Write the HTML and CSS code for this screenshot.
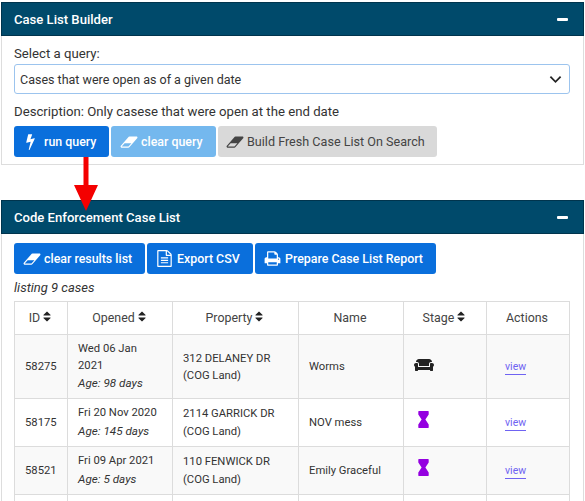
FILE: index.html
```html
<!DOCTYPE html>
<html lang="en">
<head>
  <meta charset="UTF-8">
  <meta name="viewport" content="width=device-width, initial-scale=1.0">
  <title>Code Enforcement Case List</title>
  <link rel="stylesheet" href="styles.css">
</head>
<body>
  <svg class="icon-defs" aria-hidden="true">
    <symbol id="i-bolt" viewBox="0 0 1792 1792"><path d="M1333 566q18 20 7 44l-540 1157q-13 25-42 25-4 0-14-2-17-5-25.5-19t-4.5-30l197-808-406 101q-4 1-12 1-18 0-31-11-18-15-13-39l201-825q4-14 16-23t28-9h328q19 0 32 12.5t13 29.5q0 8-5 18l-171 463 396-98q8-2 12-2 19 0 34 15z"/></symbol>
    <symbol id="i-eraser" viewBox="0 0 2048 1792"><path d="M960 1408l336-384h-768l-336 384h768zm1013-1077q15 34 9.5 71.5t-30.5 65.5l-896 1024q-38 44-96 44h-768q-38 0-69.5-20.5t-47.5-54.5q-15-34-9.5-71.5t30.5-65.5l896-1024q38-44 96-44h768q38 0 70 20.5t47 54.5z"/></symbol>
    <symbol id="i-file" viewBox="0 0 1792 1792"><path d="M1596 380q28 28 48 76t20 88v1152q0 40-28 68t-68 28h-1344q-40 0-68-28t-28-68v-1600q0-40 28-68t68-28h896q40 0 88 20t76 48zm-444-244v376h376q-10-29-22-41l-313-313q-12-12-41-22zm384 1528v-1024h-416q-40 0-68-28t-28-68v-416h-768v1536h1280zm-1024-864q0-14 9-23t23-9h704q14 0 23 9t9 23v64q0 14-9 23t-23 9h-704q-14 0-23-9t-9-23v-64zm736 224q14 0 23 9t9 23v64q0 14-9 23t-23 9h-704q-14 0-23-9t-9-23v-64q0-14 9-23t23-9h704zm0 256q14 0 23 9t9 23v64q0 14-9 23t-23 9h-704q-14 0-23-9t-9-23v-64q0-14 9-23t23-9h704z"/></symbol>
    <symbol id="i-print" viewBox="0 0 1792 1792"><path d="M448 1536h896v-256h-896v256zm0-640h896v-384h-160q-40 0-68-28t-28-68v-160h-640v640zm1152 64q0-26-19-45t-45-19-45 19-19 45 19 45 45 19 45-19 19-45zm128 0v416q0 13-9.500 22.500t-22.500 9.500h-224v160q0 40-28 68t-68 28h-960q-40 0-68-28t-28-68v-160h-224q-13 0-22.500-9.500t-9.500-22.500v-416q0-79 56.500-135.500t135.500-56.500h64v-544q0-40 28-68t68-28h672q40 0 88 20t76 48l152 152q28 28 48 76t20 88v256h64q79 0 135.500 56.500t56.500 135.500z"/></symbol>
    <symbol id="i-sort" viewBox="320 192 1152 1408"><path d="M1408 1088q0 26-19 45l-448 448q-19 19-45 19t-45-19l-448-448q-19-19-19-45t19-45 45-19h896q26 0 45 19t19 45zm0-384q0 26-19 45t-45 19h-896q-26 0-45-19t-19-45 19-45l448-448q19-19 45-19t45 19l448 448q19 19 19 45z"/></symbol>
    <symbol id="i-couch" viewBox="0 0 640 512"><path d="M160 224v64h320v-64c0-35.300 28.700-64 64-64h32c0-53-43-96-96-96H160c-53 0-96 43-96 96h32c35.300 0 64 28.700 64 64zm416-32h-32c-17.700 0-32 14.300-32 32v96H128v-96c0-17.700-14.300-32-32-32H64c-35.300 0-64 28.700-64 64 0 23.600 13 44 32 55.100V432c0 8.800 7.200 16 16 16h64c8.800 0 16-7.200 16-16v-16h384v16c0 8.800 7.200 16 16 16h64c8.800 0 16-7.200 16-16V311.100c19-11.100 32-31.500 32-55.100 0-35.300-28.700-64-64-64z"/></symbol>
    <symbol id="i-hourglass" viewBox="0 0 11 18"><path d="M.5 0h10q.5 0 .5.5v3.300L7.500 9l3.500 5.200v3.300q0 .5-.5.5H.5q-.5 0-.5-.5v-3.300L3.500 9 0 3.800V.5Q0 0 .5 0z"/></symbol>
  </svg>

  <!-- query panel -->
  <section class="panel panel-query">
    <div class="panel-head">
      <span>Case List Builder</span>
      <span class="collapse-bar"></span>
    </div>
    <div class="panel-body">
      <div class="field-label">Select a query:</div>
      <div class="query-select">
        <span>Cases that were open as of a given date</span>
        <svg class="chevron" viewBox="0 0 14 9"><path d="M1.500 1.500 7 7l5.500-5.500"/></svg>
      </div>
      <div class="description">Description: Only casese that were open at the end date</div>
      <div class="btn-row">
        <a class="btn btn-run"><svg class="ico ico-bolt"><use href="#i-bolt"/></svg>run query</a>
        <a class="btn btn-clear"><svg class="ico ico-eraser"><use href="#i-eraser"/></svg>clear query</a>
        <a class="btn btn-grey"><svg class="ico ico-eraser"><use href="#i-eraser"/></svg>Build Fresh Case List On Search</a>
      </div>
    </div>
  </section>

  <!-- results panel -->
  <section class="panel panel-results">
    <div class="panel-head">
      <span>Code Enforcement Case List</span>
      <span class="collapse-bar"></span>
    </div>
    <div class="panel-body">
      <div class="btn-row">
        <a class="btn btn-results"><svg class="ico ico-eraser"><use href="#i-eraser"/></svg>clear results list</a>
        <a class="btn btn-export"><svg class="ico ico-file"><use href="#i-file"/></svg>Export CSV</a>
        <a class="btn btn-report"><svg class="ico ico-print"><use href="#i-print"/></svg>Prepare Case List Report</a>
      </div>
      <div class="listing">listing 9 cases</div>
      <table class="case-table">
        <colgroup>
          <col class="col-id"><col class="col-opened"><col class="col-property">
          <col class="col-name"><col class="col-stage"><col class="col-actions">
        </colgroup>
        <thead>
          <tr>
            <th>ID <svg class="sort"><use href="#i-sort"/></svg></th>
            <th>Opened <svg class="sort"><use href="#i-sort"/></svg></th>
            <th>Property <svg class="sort"><use href="#i-sort"/></svg></th>
            <th>Name</th>
            <th>Stage <svg class="sort"><use href="#i-sort"/></svg></th>
            <th>Actions</th>
          </tr>
        </thead>
        <tbody>
          <tr class="row-tall">
            <td>58275</td>
            <td>Wed 06 Jan 2021<div class="age">Age: 98 days</div></td>
            <td>312 DELANEY DR<br>(COG Land)</td>
            <td>Worms</td>
            <td class="cell-stage"><svg class="stage-couch"><use href="#i-couch"/></svg></td>
            <td class="cell-action"><a class="view-link">view</a></td>
          </tr>
          <tr>
            <td>58175</td>
            <td>Fri 20 Nov 2020<div class="age">Age: 145 days</div></td>
            <td>2114 GARRICK DR<br>(COG Land)</td>
            <td>NOV mess</td>
            <td class="cell-stage"><svg class="stage-hourglass"><use href="#i-hourglass"/></svg></td>
            <td class="cell-action"><a class="view-link">view</a></td>
          </tr>
          <tr>
            <td>58521</td>
            <td>Fri 09 Apr 2021<div class="age">Age: 5 days</div></td>
            <td>110 FENWICK DR<br>(COG Land)</td>
            <td>Emily Graceful</td>
            <td class="cell-stage"><svg class="stage-hourglass"><use href="#i-hourglass"/></svg></td>
            <td class="cell-action"><a class="view-link">view</a></td>
          </tr>
          <tr class="row-cut">
            <td></td><td></td><td></td><td></td><td></td><td></td>
          </tr>
        </tbody>
      </table>
    </div>
  </section>

  <!-- red arrow drawn over the screenshot -->
  <svg class="red-arrow" viewBox="0 0 24 54"><path d="M9.500 0h5v28H24L12 54 0 28h9.500z"/></svg>
</body>
</html>
```

FILE: styles.css
```css
html, body {
  height: 501px;
  overflow: hidden;
}
body {
  margin: 0;
  padding: 2px 1px 0;
  position: relative;
  box-sizing: border-box;
  background-color: #fff;
  color: #333;
  font-family: Roboto, "Liberation Sans", sans-serif;
  font-size: 13.200px;
}
.icon-defs {
  display: none;
}

.panel {
  border: 1px solid #ddd;
  border-top: none;
  width: 583px;
  box-sizing: border-box;
}
.panel-query {
  height: 163px;
}
.panel-results {
  margin-top: 35px;
}
.panel-head {
  height: 34px;
  margin: 0 -1px;
  padding: 0 14px 0 12px;
  display: flex;
  align-items: center;
  justify-content: space-between;
  background-color: #004a6b;
  border: 1px solid #00344d;
  box-sizing: border-box;
  color: #fff;
  font-size: 13.100px;
  font-weight: 500;
}
.collapse-bar {
  width: 11px;
  height: 3px;
  margin-right: 1px;
  background-color: #fff;
  border-radius: 1px;
}
.panel-body {
  padding: 0 12px;
}

.field-label {
  margin-top: 9px;
  line-height: 18px;
}
.query-select {
  height: 30px;
  margin-top: 1px;
  width: 556px;
  padding: 0 7px 0 5px;
  display: flex;
  align-items: center;
  justify-content: space-between;
  box-sizing: border-box;
  border: 1px solid #9cc4ee;
  border-radius: 3px;
  font-size: 12.500px;
}
.chevron {
  width: 13px;
  height: 9px;
  fill: none;
  stroke: #222;
  stroke-width: 1.900;
}
.description {
  margin-top: 9px;
  line-height: 18px;
}

.btn-row {
  display: flex;
  gap: 2px;
}
.panel-query .btn-row {
  margin-top: 5px;
}
.panel-results .btn-row {
  margin-top: 9px;
}
.btn {
  height: 31px;
  display: flex;
  align-items: center;
  box-sizing: border-box;
  border-radius: 3px;
  background-color: #0a6fdc;
  color: #fff;
  font-size: 12.400px;
  font-weight: 500;
  white-space: nowrap;
}
.btn-run {
  width: 95px;
  padding-left: 10px;
}
.btn-clear {
  width: 105px;
  padding-left: 9px;
  background-color: #74b8ee;
}
.btn-grey {
  width: 219px;
  padding-left: 8px;
  background-color: #d9d9d9;
  color: #444;
  font-size: 12.600px;
  font-weight: 400;
}
.btn-results {
  width: 131px;
  padding-left: 9px;
}
.btn-export {
  width: 106px;
  padding-left: 9px;
}
.btn-report {
  width: 181px;
  padding-left: 9px;
}
.ico {
  fill: currentColor;
  flex: none;
}
.ico-bolt {
  width: 17px;
  height: 17px;
  margin-right: 5px;
  margin-left: -2px;
}
.ico-eraser {
  width: 18px;
  height: 16px;
  margin-right: 3px;
}
.ico-file {
  width: 17px;
  height: 19px;
  margin-right: 4px;
}
.ico-print {
  width: 17px;
  height: 17px;
  margin-right: 4px;
}

.listing {
  margin-top: 5px;
  line-height: 18px;
  font-size: 13px;
  font-style: italic;
}

.case-table {
  margin-top: 4px;
  width: 555px;
  table-layout: fixed;
  border-collapse: collapse;
  font-size: 11.250px;
  line-height: 18px;
}
.col-id { width: 53px; }
.col-opened { width: 105px; }
.col-property { width: 126px; }
.col-name { width: 105px; }
.col-stage { width: 83px; }
.col-actions { width: 83px; }

.case-table th,
.case-table td {
  border: 1px solid #dcdcdc;
  padding: 0 10px;
}
.case-table th {
  height: 32px;
  padding: 0 11px 0 9px;
  font-weight: 400;
  font-size: 12.400px;
  color: #444;
  text-align: center;
  white-space: nowrap;
}
.case-table td {
  height: 47px;
}
.case-table tbody tr:nth-child(odd) {
  background-color: #f9f9f9;
}
.case-table .row-tall td {
  height: 63px;
  line-height: 17px;
}
.case-table .row-cut td {
  height: 30px;
}
.age {
  font-size: 11.700px;
  font-style: italic;
  line-height: 19px;
}
.sort {
  width: 8px;
  height: 11px;
  fill: #222;
}
.stage-couch {
  display: block;
  width: 20px;
  height: 16px;
  margin-bottom: 3px;
  fill: #222;
}
.stage-hourglass {
  display: block;
  width: 11px;
  height: 17px;
  margin: 0 0 7px 4px;
  fill: #9400e0;
}
.case-table .cell-action {
  padding-left: 18px;
}
.view-link {
  display: inline-block;
  color: #6f63f2;
  font-size: 10.500px;
  line-height: 15px;
  border-bottom: 1px solid #6f63f2;
}

.red-arrow {
  position: absolute;
  left: 74px;
  top: 157px;
  width: 24px;
  height: 54px;
  fill: #f40000;
}
```
